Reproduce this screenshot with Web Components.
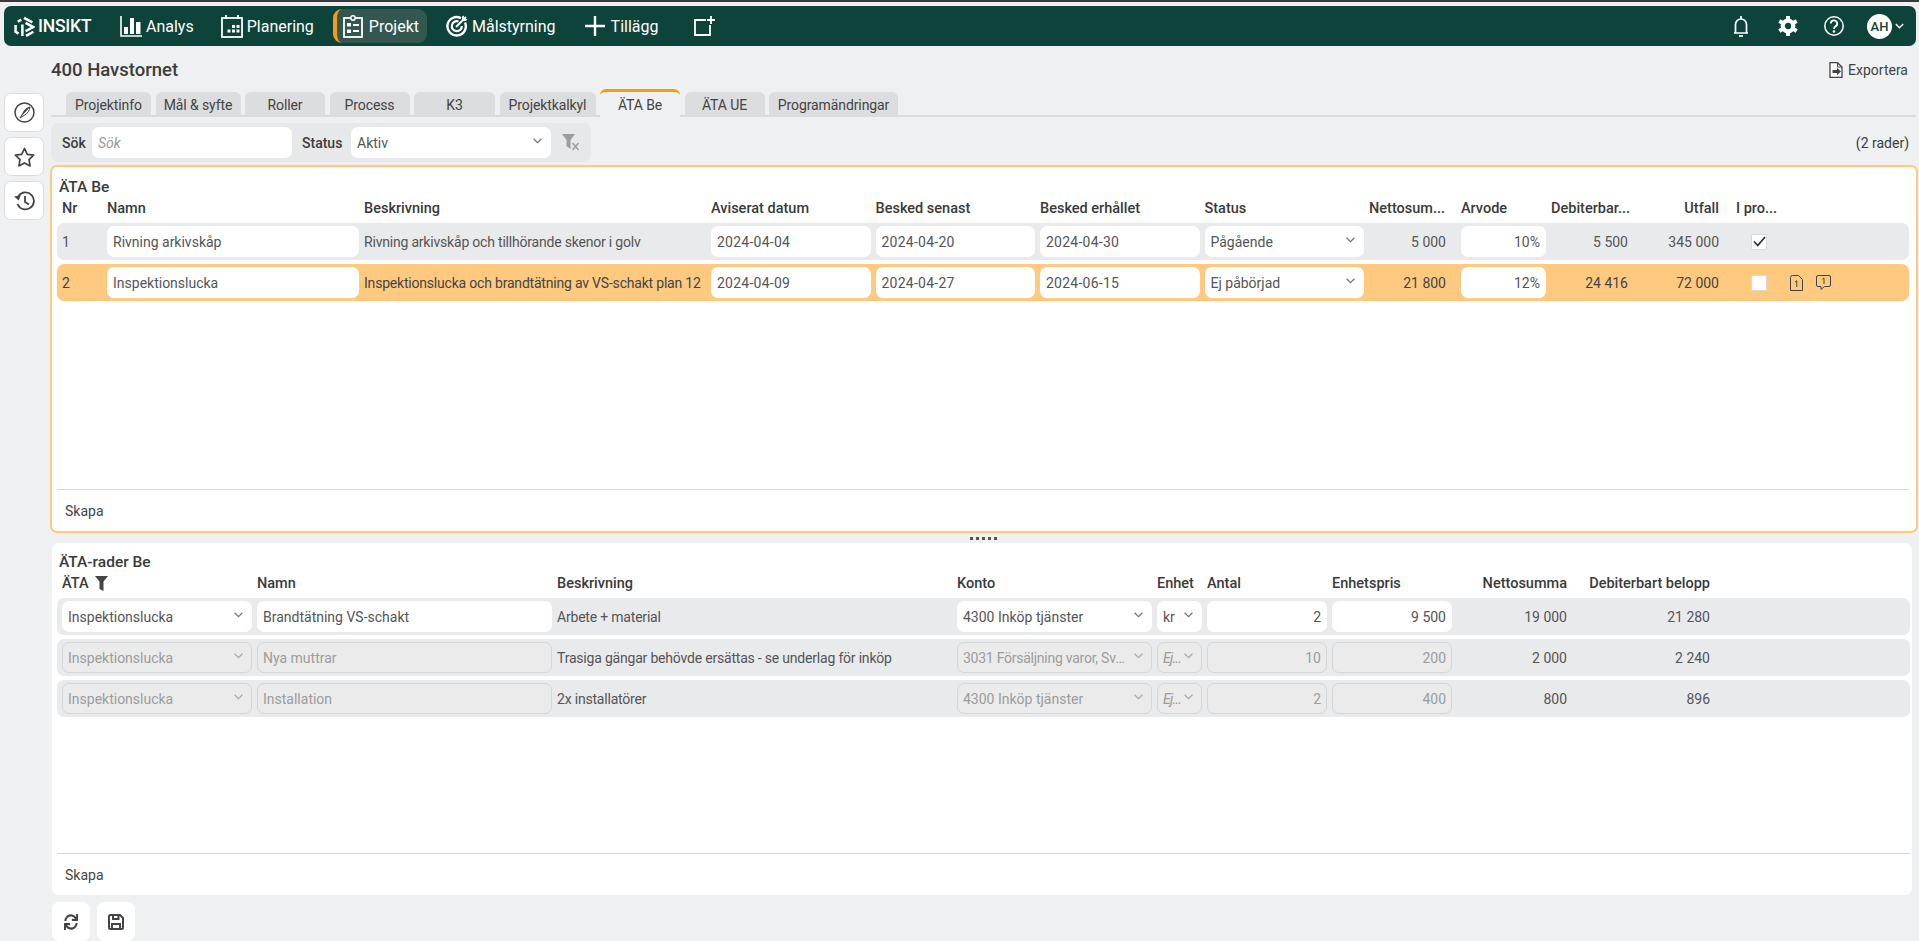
<!DOCTYPE html>
<html lang="sv">
<head>
<meta charset="utf-8">
<title>Insikt</title>
<style>
  html, body { margin: 0; height: 941px; overflow: hidden; background: #f0f0f0; }
  body { font-family: Roboto, "Liberation Sans", sans-serif; font-size: 14px; color: #444; }
</style>
</head>
<body>
<app-shell></app-shell>

<script>
// Ikoner
const ICONS = {
  analys: `<svg width="22" height="21" viewBox="0 0 22 21" fill="none"><path d="M1 0v20h21" stroke="#fff" stroke-width="1.6"/><path d="M4 11h4v7H4zM10 2h4v16h-4zM16 6h4.5v12H16z" fill="#fff"/></svg>`,
  planering: `<svg width="22" height="23" viewBox="0 0 22 23" fill="none"><rect x="1" y="3" width="20" height="19" stroke="#fff" stroke-width="1.8"/><path d="M5 0v4M17 0v4" stroke="#fff" stroke-width="1.8"/><path d="M11 10h3v3h-3zM15.500 10h3v3h-3zM6.500 14.500h3v3h-3zM11 14.500h3v3h-3zM15.500 14.500h3v3h-3z" fill="#fff"/></svg>`,
  projekt: `<svg width="20" height="23" viewBox="0 0 20 23" fill="none"><rect x="1" y="3" width="18" height="19" stroke="#fff" stroke-width="1.8"/><circle cx="10" cy="3" r="2.200" fill="#33574f" stroke="#fff" stroke-width="1.500"/><path d="M4 8h4v3.500H4zM4 14.500h4v3.500H4z" fill="#fff"/><path d="M10 10h6M10 16h6" stroke="#fff" stroke-width="1.800"/></svg>`,
  mal: `<svg width="22" height="22" viewBox="0 0 22 22" fill="none" stroke="#fff"><path d="M15 3.200A9.200 9.200 0 1 0 19 7.500" stroke-width="2.400"/><path d="M12.500 6.500a5 5 0 1 0 3.300 4.500" stroke-width="2.200"/><path d="M10 12L20 2" stroke-width="2"/><path d="M16 5.500V1.500l2-1v3.500h3.500l-1.500 2H16z" fill="#fff" stroke="none"/></svg>`,
  plus: `<svg width="20" height="20" viewBox="0 0 20 20"><path d="M10 0v20M0 10h20" stroke="#fff" stroke-width="2.400"/></svg>`,
  addBox: `<svg width="22" height="20" viewBox="0 0 22 20" fill="none" stroke="#fff" stroke-width="1.800"><path d="M12 4H1v15h15V9"/><path d="M17 0v8M13 4h8"/></svg>`,
  bell: `<svg width="16" height="21" viewBox="0 0 16 21" fill="none" stroke="#fff" stroke-width="1.700"><path d="M1 17h14M2.500 17V8.500a5.500 5.500 0 0 1 11 0V17"/><path d="M8 0v3" /><path d="M6 20h4"/></svg>`,
  gear: `<svg width="20" height="20" viewBox="0 0 20 20" fill="none" stroke="#fff"><circle cx="10" cy="10" r="5.300" stroke-width="4.200"/><path d="M10 0v3.500M10 16.500V20M1.300 5l3 1.750M15.700 13.250l3 1.750M1.300 15l3-1.750M15.700 6.750l3-1.750" stroke-width="4"/></svg>`,
  help: `<svg width="20" height="20" viewBox="0 0 20 20" fill="none" stroke="#fff" stroke-width="1.500"><circle cx="10" cy="10" r="9.200"/><path d="M6.800 7.600A3.200 3.200 0 1 1 11.500 10.400C10.400 11 10 11.600 10 13" stroke-width="1.800"/><circle cx="10" cy="15.500" r=".6"/></svg>`,
  chevronWhite: `<svg width="9" height="6" viewBox="0 0 9 6" fill="none"><path d="M.8 1l3.700 3.700L8.200 1" stroke="#fff" stroke-width="1.500"/></svg>`,
  chevron: `<svg width="9" height="6" viewBox="0 0 9 6" fill="none"><path d="M.6 .8l3.900 3.900L8.400 .8" stroke="currentColor" stroke-width="1.300"/></svg>`,
  compass: `<svg width="21" height="21" viewBox="0 0 21 21" fill="none" stroke="#444" stroke-width="1.500"><circle cx="10.500" cy="10.500" r="9.500"/><path d="M16 5c-.5 3.500-2.500 6.800-5.500 8.200l-4.500 2.800 2.800-4.500C10 8 12.800 5.800 16 5z" stroke-width="1"/><path d="M16 5L6 16l2.800-4.500C10 8 12.800 5.800 16 5z" fill="#444" stroke="none"/></svg>`,
  star: `<svg width="21" height="20" viewBox="0 0 21 20" fill="none" stroke="#444" stroke-width="1.700" stroke-linejoin="round"><path d="M10.500 1.500l2.800 5.800 6.300.9-4.600 4.400 1.100 6.300-5.600-3-5.600 3 1.100-6.300L1.400 8.200l6.300-.9z"/></svg>`,
  history: `<svg width="21" height="20" viewBox="0 0 21 20" fill="none" stroke="#444" stroke-width="1.800"><path d="M4.500 5A8.500 8.500 0 1 1 3.500 13"/><path d="M0 5.500l4.800 4 1.900-5.300z" fill="#444" stroke="none"/><path d="M11 5v6l4 2.500"/></svg>`,
  filterX: `<svg width="18" height="17" viewBox="0 0 18 17"><path d="M0 0h13L8.500 6v9l-4-3V6z" fill="#9a9c9e"/><path d="M10.500 9l6 7M16.500 9l-6 7" stroke="#9a9c9e" stroke-width="1.400"/></svg>`,
  filter: `<svg width="13" height="15" viewBox="0 0 13 15"><path d="M0 0h13L8.500 5.500V15l-4-2V5.500z" fill="#444"/></svg>`,
  sync: `<svg width="14" height="16" viewBox="0 0 512 512" preserveAspectRatio="none"><path fill="#444" d="M440.65 12.57l4 82.77A247.16 247.16 0 0 0 255.83 8C134.73 8 33.91 94.92 12.29 209.82A12 12 0 0 0 24.09 224h49.05a12 12 0 0 0 11.67-9.26 175.91 175.91 0 0 1 317-56.94l-101.46-4.86a12 12 0 0 0-12.57 12v47.41a12 12 0 0 0 12 12H500a12 12 0 0 0 12-12V12a12 12 0 0 0-12-12h-47.37a12 12 0 0 0-11.98 12.57zM255.83 432a175.61 175.61 0 0 1-146-77.8l101.8 4.87a12 12 0 0 0 12.57-12v-47.4a12 12 0 0 0-12-12H12a12 12 0 0 0-12 12V500a12 12 0 0 0 12 12h47.35a12 12 0 0 0 12-12.6l-4.15-82.57A247.17 247.17 0 0 0 255.83 504c121.11 0 221.93-86.92 243.55-201.82a12 12 0 0 0-11.8-14.18h-49.05a12 12 0 0 0-11.67 9.26A175.86 175.86 0 0 1 255.83 432z"/></svg>`,
  save: `<svg width="16" height="16" viewBox="0 0 16 16" fill="none" stroke="#444" stroke-width="2"><path d="M2.500 1H12l3 3v9.500a1.500 1.500 0 0 1-1.500 1.500h-11A1.500 1.500 0 0 1 1 13.500v-11A1.500 1.500 0 0 1 2.500 1z"/><path d="M5 1v4h5.500V1M4 15V10h8v5"/></svg>`,
  exportFile: `<svg width="14" height="16" viewBox="0 0 14 16"><path d="M1 .7h7.500L13 5v10.300H1z" fill="#fff" stroke="#444" stroke-width="1.300"/><path d="M8.500 .7V5H13" fill="none" stroke="#444"/><path d="M3.500 8h4.500V5.800l4 3.700-4 3.700V11H3.500z" fill="#444"/></svg>`,
  fileOne: `<svg width="13" height="16" viewBox="0 0 13 16" fill="none" stroke="#444" stroke-width="1"><path d="M.5 2.500A2 2 0 0 1 2.500 .5h6l4 4v11h-12z"/><path d="M5 7l1.800-1.200V12"/></svg>`,
  commentOne: `<svg width="15" height="15" viewBox="0 0 15 15" fill="none" stroke="#444" stroke-width="1"><path d="M2 .5h11A1.500 1.500 0 0 1 14.500 2v8A1.500 1.500 0 0 1 13 11.500H8.500L5 14.500v-3H2A1.500 1.500 0 0 1 .5 10V2A1.500 1.500 0 0 1 2 .5z"/><path d="M6.500 4l1.500-1v6"/></svg>`,
  check: `<svg width="13" height="11" viewBox="0 0 13 11" fill="none"><path d="M1 5.500l3.800 4L12 1" stroke="#333" stroke-width="1.800"/></svg>`,
  logo: `<svg width="21" height="21" viewBox="0 0 20 20" fill="none" stroke="#fff" stroke-width="2.400"><path d="M3.500 5.500L7 3.400M9.500 1.800l8 4.200M1.500 8.500v6.500l2.800 1.800M8 8v11"/><path d="M11 6.500l7.500 4-7.500 4M11.500 19l7-4"/></svg>`
};

// Campo som ser ut som input eller select
class FieldBox extends HTMLElement {
  constructor() {
    super();
    this.attachShadow({ mode: 'open' });
  }
  connectedCallback() {
    const isSelect = this.hasAttribute('select');
    this.shadowRoot.innerHTML = `
      <style>
        :host {
          display: flex;
          align-items: center;
          box-sizing: border-box;
          height: 31px;
          min-width: 0;
          padding: 0 6px;
          gap: 3px;
          background: #fff;
          border-radius: 7px;
          color: #555;
        }
        :host([disabled]) {
          background: #ebebec;
          border: 1px solid #d5d6d8;
          color: #9c9c9c;
          padding: 0 5px;
        }
        :host([right]) { justify-content: flex-end; }
        :host([hint]) { color: #9a9a9a; font-style: italic; }
        :host([tight]) { gap: 2px; padding-right: 0; letter-spacing: -.7px; }
        .txt { flex: 1; min-width: 0; white-space: nowrap; overflow: hidden; text-overflow: ellipsis; }
        :host([right]) .txt { text-align: right; }
        .chev { display: flex; color: #777; margin-right: 3px; margin-top: -3px; flex: none; }
        :host([tight]) .chev { margin-right: 8px; }
        :host([disabled]) .chev { color: #aaa; }
      </style>
      <span class="txt"><slot></slot></span>
      ${isSelect ? `<span class="chev">${ICONS.chevron}</span>` : ''}
    `;
  }
}
customElements.define('field-box', FieldBox);

// Menyval i toppen
class NavItem extends HTMLElement {
  constructor() {
    super();
    this.attachShadow({ mode: 'open' });
  }
  connectedCallback() {
    this.shadowRoot.innerHTML = `
      <style>
        :host {
          display: flex;
          align-items: center;
          gap: 4px;
          height: 34px;
          box-sizing: border-box;
          color: #fff;
          font-size: 16px;
          white-space: nowrap;
        }
        :host([active]) {
          gap: 6px;
          background: #33574f;
          border-left: 4px solid #f59c12;
          border-radius: 9px;
          padding: 0 8px 0 6px;
        }
        .ic { display: flex; }
      </style>
      <span class="ic">${ICONS[this.getAttribute('icon')] || ''}</span>
      <slot></slot>
    `;
  }
}
customElements.define('nav-item', NavItem);

class TopNav extends HTMLElement {
  constructor() {
    super();
    this.attachShadow({ mode: 'open' });
  }
  connectedCallback() {
    this.shadowRoot.innerHTML = `
      <style>
        :host {
          display: flex;
          align-items: center;
          height: 40px;
          margin: 4px 3px 0 4px;
          padding: 0 12px 0 10px;
          background: #0d4339;
          border-radius: 7px;
          box-sizing: border-box;
        }
        .logo { display: flex; align-items: center; gap: 3px; width: 106px; color: #fff; font-size: 17.500px; font-weight: 500; letter-spacing: -.2px; }
        .items { display: flex; align-items: center; }
        nav-item { margin-right: 27px; }
        nav-item[active] { margin-right: 19px; margin-left: -8px; }
        nav-item[icon="mal"] { margin-right: 29px; }
        nav-item[icon="plus"] { gap: 6px; }
        nav-item:last-child { margin-left: 9px; }
        .right { margin-left: auto; display: flex; align-items: center; }
        .right span { display: flex; }
        .avatar {
          width: 25px; height: 25px; border-radius: 50%;
          background: #fff; color: #0d4339; font-size: 13px; font-weight: 500;
          align-items: center; justify-content: center;
        }
      </style>
      <div class="logo"><span style="display:flex">${ICONS.logo}</span>INSIKT</div>
      <div class="items">
        <nav-item icon="analys">Analys</nav-item>
        <nav-item icon="planering">Planering</nav-item>
        <nav-item icon="projekt" active>Projekt</nav-item>
        <nav-item icon="mal">Målstyrning</nav-item>
        <nav-item icon="plus">Tillägg</nav-item>
        <nav-item icon="addBox"></nav-item>
      </div>
      <div class="right">
        <span style="margin-right:29px">${ICONS.bell}</span>
        <span style="margin-right:26px">${ICONS.gear}</span>
        <span style="margin-right:23px">${ICONS.help}</span>
        <span class="avatar">AH</span>
        <span style="margin-left:3px">${ICONS.chevronWhite}</span>
      </div>
    `;
  }
}
customElements.define('top-nav', TopNav);

// Knapp med ikon
class IconButton extends HTMLElement {
  constructor() {
    super();
    this.attachShadow({ mode: 'open' });
  }
  connectedCallback() {
    this.shadowRoot.innerHTML = `
      <style>
        :host {
          display: flex;
          align-items: center;
          justify-content: center;
          box-sizing: border-box;
          width: 38px;
          height: 39px;
          background: #fff;
          border-radius: 7px;
        }
        :host([outlined]) { width: 40px; border: 1px solid #dcdddf; }
      </style>
      ${ICONS[this.getAttribute('icon')] || ''}
    `;
  }
}
customElements.define('icon-button', IconButton);

class TabBar extends HTMLElement {
  constructor() {
    super();
    this.attachShadow({ mode: 'open' });
  }
  connectedCallback() {
    const tabs = [['Projektinfo', 85], ['Mål & syfte', 85], ['Roller', 80], ['Process', 80], ['K3', 81], ['Projektkalkyl', 96], ['ÄTA Be', 80], ['ÄTA UE', 80], ['Programändringar', 129]];
    this.shadowRoot.innerHTML = `
      <style>
        :host {
          display: flex;
          align-items: flex-end;
          gap: 4.5px;
          height: 28px;
          box-sizing: border-box;
          padding-left: 15px;
          border-bottom: 2px solid #d9dbdd;
        }
        .tab {
          box-sizing: border-box;
          height: 23px;
          padding-top: 2px;
          display: flex;
          align-items: center;
          justify-content: center;
          background: #dcddde;
          border-radius: 6px 6px 0 0;
          color: #444;
          white-space: nowrap;
          letter-spacing: -.1px;
        }
        .tab.on {
          height: 28px;
          margin-bottom: -2px;
          background: #eef0f1;
          border-top: 3px solid #f59c12;
          padding-top: 1px;
        }
      </style>
      ${tabs.map(([t, w]) => `<div class="tab ${t === 'ÄTA Be' ? 'on' : ''}" style="width:${w}px">${t}</div>`).join('')}
    `;
  }
}
customElements.define('tab-bar', TabBar);

class FilterBar extends HTMLElement {
  constructor() {
    super();
    this.attachShadow({ mode: 'open' });
  }
  connectedCallback() {
    this.shadowRoot.innerHTML = `
      <style>
        :host {
          display: flex;
          align-items: center;
          height: 39px;
          width: 540px;
          box-sizing: border-box;
          padding-left: 11px;
          background: #e6e8ea;
          border-radius: 7px;
        }
        label { font-weight: 500; color: #3c3c3c; }
        span { display: flex; margin-left: 11px; }
      </style>
      <label style="width:23px">Sök</label>
      <field-box hint style="width:200px;margin:0 10px 0 7px">Sök</field-box>
      <label style="width:43px">Status</label>
      <field-box select style="width:200px;margin-left:6px">Aktiv</field-box>
      <span>${ICONS.filterX}</span>
    `;
  }
}
customElements.define('filter-bar', FilterBar);

// Panel med titel, kolumnrubriker, rader och Skapa-länk
class DataPanel extends HTMLElement {
  constructor() {
    super();
    this.attachShadow({ mode: 'open' });
  }
  connectedCallback() {
    this.shadowRoot.innerHTML = `
      <style>
        :host {
          display: flex;
          flex-direction: column;
          box-sizing: border-box;
          background: #fff;
          border-radius: 7px;
          padding: 9px 2px 0 5px;
        }
        :host([focused]) {
          border: 2px solid #ffca7f;
          padding: 10px 7px 0 5px;
        }
        .title { height: 21px; line-height: 20px; padding-left: 2px; font-size: 15.500px; font-weight: 500; color: #3a3a3a; }
        .rows { flex: 1; min-height: 0; }
        .foot {
          height: 42px;
          box-sizing: border-box;
          border-top: 1px solid #d8d9da;
          padding-left: 8px;
          display: flex;
          align-items: center;
          color: #444;
        }
      </style>
      <div class="title">${this.getAttribute('heading')}</div>
      <div class="rows"><slot></slot></div>
      <div class="foot">Skapa</div>
    `;
  }
}
customElements.define('data-panel', DataPanel);

// En rad i en tabell, kolumnerna kommer från --cols
class TableRow extends HTMLElement {
  constructor() {
    super();
    this.attachShadow({ mode: 'open' });
  }
  connectedCallback() {
    this.shadowRoot.innerHTML = `
      <style>
        :host {
          display: grid;
          grid-template-columns: var(--cols);
          column-gap: 5px;
          align-items: center;
          box-sizing: border-box;
          height: 37px;
          padding-left: 5px;
          margin-bottom: 4px;
          background: #e9eaec;
          border-radius: 7px;
          color: #555;
          white-space: nowrap;
        }
        :host([head]) {
          height: 20px;
          margin-bottom: 5px;
          background: none;
          font-weight: 500;
          font-size: 14.500px;
          color: #3a3a3a;
        }
        :host([hot]) { background: #ffca7f; color: #444; }
      </style>
      <slot></slot>
    `;
  }
}
customElements.define('table-row', TableRow);

class AppShell extends HTMLElement {
  constructor() {
    super();
    this.attachShadow({ mode: 'open' });
  }
  connectedCallback() {
    const cb = (on) => `<span class="cb">${on ? ICONS.check : ''}</span>`;
    this.shadowRoot.innerHTML = `
      <style>
        :host { display: block; height: 941px; overflow: hidden; }
        .strip { height: 2px; background: #3a3a3a; }
        .body { display: flex; padding-left: 4px; }
        .rail { width: 40px; margin-right: 7px; padding-top: 47px; display: flex; flex-direction: column; gap: 5px; flex: none; position: relative; z-index: 1; }
        main { flex: 1; min-width: 0; background: #eef0f1; margin-left: -51px; padding-left: 51px; padding-right: 3px; }
        .head { display: flex; align-items: center; justify-content: space-between; height: 38px; margin-top: 5px; padding-right: 8px; }
        h1 { margin: 0; font-size: 18.500px; font-weight: 500; color: #3c3c3c; }
        .exp { display: flex; align-items: center; gap: 5px; color: #444; }
        .exp span { display: flex; }
        .filters { display: flex; align-items: center; justify-content: space-between; margin-top: 6px; padding-right: 7px; color: #3c3c3c; }
        .p1 { height: 368px; margin: 3px -2px 0 -1px; --cols: 40px 252px 342px 159.5px 159.5px 159.5px 159.5px 77px 5px 85px 77px 86px 61px 60px; }
        .p2 { height: 352px; margin: 0 4px 0 1px; --cols: 190px 295px 395px 195px 45px 120px 120px 110px 138px; }
        .split { height: 10px; display: flex; align-items: center; justify-content: center; gap: 3px; }
        .split i { width: 3px; height: 3px; background: #555; }
        .r { text-align: right; }
        .desc { letter-spacing: -.2px; }
        .date { letter-spacing: .25px; }
        .cb {
          width: 16px; height: 16px; margin-left: 27px; box-sizing: border-box; background: #fff; border: 1px solid #d9d9d9;
          display: flex; align-items: center; justify-content: center; justify-self: start; border-radius: 2px;
        }
        .acts { display: flex; gap: 13px; }
        .acts span { display: flex; }
        .bottom { display: flex; gap: 7px; margin: 7px 0 0 1px; }
      </style>
      <div class="strip"></div>
      <top-nav></top-nav>
      <div class="body">
        <div class="rail">
          <icon-button outlined icon="compass"></icon-button>
          <icon-button outlined icon="star"></icon-button>
          <icon-button outlined icon="history"></icon-button>
        </div>
        <main>
          <div class="head">
            <h1>400 Havstornet</h1>
            <div class="exp"><span>${ICONS.exportFile}</span>Exportera</div>
          </div>
          <tab-bar></tab-bar>
          <div class="filters"><filter-bar></filter-bar><span>(2 rader)</span></div>

          <data-panel class="p1" focused heading="ÄTA Be">
            <table-row head>
              <span>Nr</span><span>Namn</span><span>Beskrivning</span><span>Aviserat datum</span><span>Besked senast</span><span>Besked erhållet</span><span>Status</span>
              <span>Nettosum...</span><span></span><span>Arvode</span><span>Debiterbar...</span><span class="r">Utfall</span><span style="padding-left:12px;grid-column:span 2">I pro...</span>
            </table-row>
            <table-row>
              <span>1</span><field-box>Rivning arkivskåp</field-box><span class="desc">Rivning arkivskåp och tillhörande skenor i golv</span>
              <field-box class="date">2024-04-04</field-box><field-box class="date">2024-04-20</field-box><field-box class="date">2024-04-30</field-box><field-box select>Pågående</field-box>
              <span class="r">5 000</span><span></span><field-box right>10%</field-box><span class="r">5 500</span><span class="r">345 000</span>${cb(true)}<span></span>
            </table-row>
            <table-row hot>
              <span>2</span><field-box>Inspektionslucka</field-box><span class="desc">Inspektionslucka och brandtätning av VS-schakt plan 12</span>
              <field-box class="date">2024-04-09</field-box><field-box class="date">2024-04-27</field-box><field-box class="date">2024-06-15</field-box><field-box select>Ej påbörjad</field-box>
              <span class="r">21 800</span><span></span><field-box right>12%</field-box><span class="r">24 416</span><span class="r">72 000</span>${cb(false)}
              <span class="acts"><span>${ICONS.fileOne}</span><span>${ICONS.commentOne}</span></span>
            </table-row>
          </data-panel>

          <div class="split"><i></i><i></i><i></i><i></i><i></i></div>

          <data-panel class="p2" heading="ÄTA-rader Be">
            <table-row head>
              <span style="display:flex;align-items:center;gap:6px">ÄTA ${ICONS.filter}</span><span>Namn</span><span>Beskrivning</span><span>Konto</span><span>Enhet</span><span>Antal</span><span>Enhetspris</span>
              <span class="r">Nettosumma</span><span class="r">Debiterbart belopp</span>
            </table-row>
            <table-row>
              <field-box select>Inspektionslucka</field-box><field-box>Brandtätning VS-schakt</field-box><span class="desc">Arbete + material</span>
              <field-box select>4300 Inköp tjänster</field-box><field-box select>kr</field-box><field-box right>2</field-box><field-box right>9 500</field-box>
              <span class="r">19 000</span><span class="r">21 280</span>
            </table-row>
            <table-row>
              <field-box select disabled>Inspektionslucka</field-box><field-box disabled>Nya muttrar</field-box><span class="desc">Trasiga gängar behövde ersättas - se underlag för inköp</span>
              <field-box select disabled style="letter-spacing:-.25px">3031 Försäljning varor, Sverige</field-box><field-box select disabled hint tight>Ej angiven</field-box><field-box right disabled>10</field-box><field-box right disabled>200</field-box>
              <span class="r">2 000</span><span class="r">2 240</span>
            </table-row>
            <table-row>
              <field-box select disabled>Inspektionslucka</field-box><field-box disabled>Installation</field-box><span class="desc">2x installatörer</span>
              <field-box select disabled>4300 Inköp tjänster</field-box><field-box select disabled hint tight>Ej angiven</field-box><field-box right disabled>2</field-box><field-box right disabled>400</field-box>
              <span class="r">800</span><span class="r">896</span>
            </table-row>
          </data-panel>

          <div class="bottom"><icon-button icon="sync"></icon-button><icon-button icon="save"></icon-button></div>
        </main>
      </div>
    `;
  }
}
customElements.define('app-shell', AppShell);
</script>
</body>
</html>
